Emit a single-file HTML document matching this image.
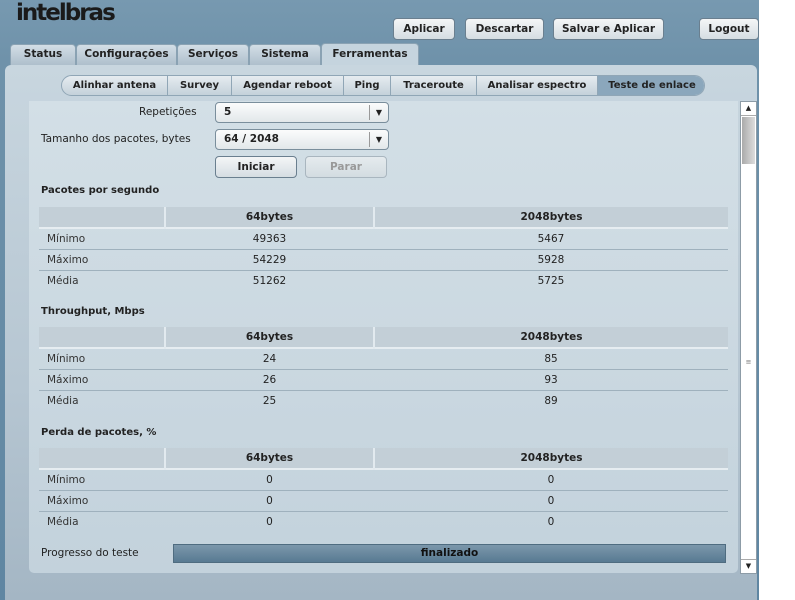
<!DOCTYPE html>
<html><head><meta charset="utf-8"><style>
*{box-sizing:border-box;margin:0;padding:0}
body{width:795px;height:600px;background:#fff;font-family:"DejaVu Sans","Liberation Sans",sans-serif;font-size:10.5px;color:#222;position:relative;overflow:hidden}
.top{position:absolute;left:0;top:0;width:759px;height:600px;background:linear-gradient(#7799b0,#6f92aa 60px,#5f86a2 600px)}
.logo{position:absolute;left:16px;top:0px;font:bold 23px "DejaVu Sans",sans-serif;color:#1a1a1a;letter-spacing:-2px}
.btn{position:absolute;top:18px;height:22px;border:1px solid #6a7f8f;border-radius:4px;background:linear-gradient(#f4f6f7,#d5dde2);font-weight:bold;font-size:10.5px;text-align:center;line-height:20px;color:#222}
.tab{position:absolute;top:44px;height:21px;background:linear-gradient(#d3dee6,#aebfcc);border:1px solid #8aa2b3;border-bottom:none;border-radius:4px 4px 0 0;font-weight:bold;text-align:center;line-height:19px}
.tab.act{background:#c5d4de;top:43px;height:22px;line-height:21px}
.panel{position:absolute;left:5px;top:65px;width:752px;height:535px;background:linear-gradient(#c8d6df,#b6c6d2 60%,#a4b6c4);border-radius:6px 6px 0 0}
.sub{position:absolute;left:61px;top:75px;width:644px;height:21px;border-radius:11px;background:linear-gradient(#e6ecf0,#c4d1da);border:1px solid #90a6b6;overflow:hidden}
.sub span{position:absolute;top:0;height:19px;line-height:19px;text-align:center;font-weight:bold;border-left:1px solid #90a6b6;font-size:10px}
.content{position:absolute;left:29px;top:101px;width:709px;height:472px;background:linear-gradient(#d3dfe6,#c3d2dc);border-radius:0 0 5px 5px}
.lbl{position:absolute;color:#222}
.sel{position:absolute;left:215px;width:174px;height:21px;border:1px solid #7a8e9c;border-radius:4px;background:linear-gradient(#fbfcfc,#e2e7ea);font-weight:bold;line-height:19px;padding-left:8px}
.sel:after{content:"▼";position:absolute;right:0;top:2px;width:18px;border-left:1px solid #999;height:15px;line-height:15px;text-align:center;font-size:8px}
.h{position:absolute;left:41px;font-weight:bold;font-size:10px}
table{position:absolute;left:39px;width:689px;border-collapse:collapse;font-size:10.5px}
td{height:21px;padding:0}
tr.hd td{background:#c3cfd7;font-weight:bold;text-align:center;border-left:2px solid #e2eaef}
tr.hd td:first-child{border-left:none}
tr.r td{border-top:1px solid #9fb1bd;text-align:center}
tr.r td:first-child{text-align:left;padding-left:8px;color:#333}
tr.hd+tr td{border-top:2px solid #e6edf1}
.sb{position:absolute;left:740px;top:101px;width:17px;height:473px;background:#fff;border:1px solid #8d9ca7}
</style></head><body>
<div class="top"></div>
<div class="logo">intelbras</div>
<div class="btn" style="left:393px;width:62px">Aplicar</div>
<div class="btn" style="left:465px;width:79px">Descartar</div>
<div class="btn" style="left:553px;width:111px">Salvar e Aplicar</div>
<div class="btn" style="left:699px;width:60px">Logout</div>
<div class="tab" style="left:10px;width:66px">Status</div>
<div class="tab" style="left:76px;width:101px">Configurações</div>
<div class="tab" style="left:177px;width:72px">Serviços</div>
<div class="tab" style="left:249px;width:72px">Sistema</div>
<div class="panel"></div>
<div class="tab act" style="left:321px;width:98px">Ferramentas</div>
<div class="sub">
<span style="left:0;width:105px;border-left:none">Alinhar antena</span>
<span style="left:105px;width:64px">Survey</span>
<span style="left:169px;width:112px">Agendar reboot</span>
<span style="left:281px;width:47px">Ping</span>
<span style="left:328px;width:86px">Traceroute</span>
<span style="left:414px;width:121px">Analisar espectro</span>
<span style="left:535px;width:109px;background:#8ba7bc">Teste de enlace</span>
</div>
<div class="content"></div>
<div class="lbl" style="left:139px;top:106px">Repetições</div>
<div class="sel" style="top:102px">5</div>
<div class="lbl" style="left:41px;top:133px">Tamanho dos pacotes, bytes</div>
<div class="sel" style="top:129px">64 / 2048</div>
<div class="btn" style="left:215px;top:156px;width:82px">Iniciar</div>
<div class="btn" style="left:305px;top:156px;width:82px;color:#999;border-color:#a9b6bf;background:linear-gradient(#e5ebee,#d3dce1)">Parar</div>

<div class="h" style="top:185px">Pacotes por segundo</div>
<table style="top:207px"><colgroup><col style="width:126px"><col style="width:209px"><col></colgroup>
<tr class="hd"><td></td><td>64bytes</td><td>2048bytes</td></tr>
<tr class="r"><td>Mínimo</td><td>49363</td><td>5467</td></tr>
<tr class="r"><td>Máximo</td><td>54229</td><td>5928</td></tr>
<tr class="r"><td>Média</td><td>51262</td><td>5725</td></tr></table>

<div class="h" style="top:306px">Throughput, Mbps</div>
<table style="top:327px"><colgroup><col style="width:126px"><col style="width:209px"><col></colgroup>
<tr class="hd"><td></td><td>64bytes</td><td>2048bytes</td></tr>
<tr class="r"><td>Mínimo</td><td>24</td><td>85</td></tr>
<tr class="r"><td>Máximo</td><td>26</td><td>93</td></tr>
<tr class="r"><td>Média</td><td>25</td><td>89</td></tr></table>

<div class="h" style="top:427px">Perda de pacotes, %</div>
<table style="top:448px"><colgroup><col style="width:126px"><col style="width:209px"><col></colgroup>
<tr class="hd"><td></td><td>64bytes</td><td>2048bytes</td></tr>
<tr class="r"><td>Mínimo</td><td>0</td><td>0</td></tr>
<tr class="r"><td>Máximo</td><td>0</td><td>0</td></tr>
<tr class="r"><td>Média</td><td>0</td><td>0</td></tr></table>

<div class="lbl" style="left:41px;top:547px">Progresso do teste</div>
<div style="position:absolute;left:173px;top:544px;width:553px;height:19px;background:linear-gradient(#7b97ab,#587a92);border:1px solid #4f6c80;text-align:center;font-weight:bold;line-height:17px;color:#111">finalizado</div>

<div class="sb">
<div style="position:absolute;left:0;top:0;width:15px;height:14px;border-bottom:1px solid #aaa;text-align:center;font-size:7px;line-height:13px">▲</div>
<div style="position:absolute;left:1px;top:15px;width:13px;height:47px;background:linear-gradient(90deg,#aaa,#ddd)"></div>
<div style="position:absolute;left:0;top:256px;width:15px;text-align:center;font-size:7px;color:#777">≡</div>
<div style="position:absolute;left:0;bottom:0;width:15px;height:14px;border-top:1px solid #aaa;text-align:center;font-size:7px;line-height:13px">▼</div>
</div>
</body></html>
